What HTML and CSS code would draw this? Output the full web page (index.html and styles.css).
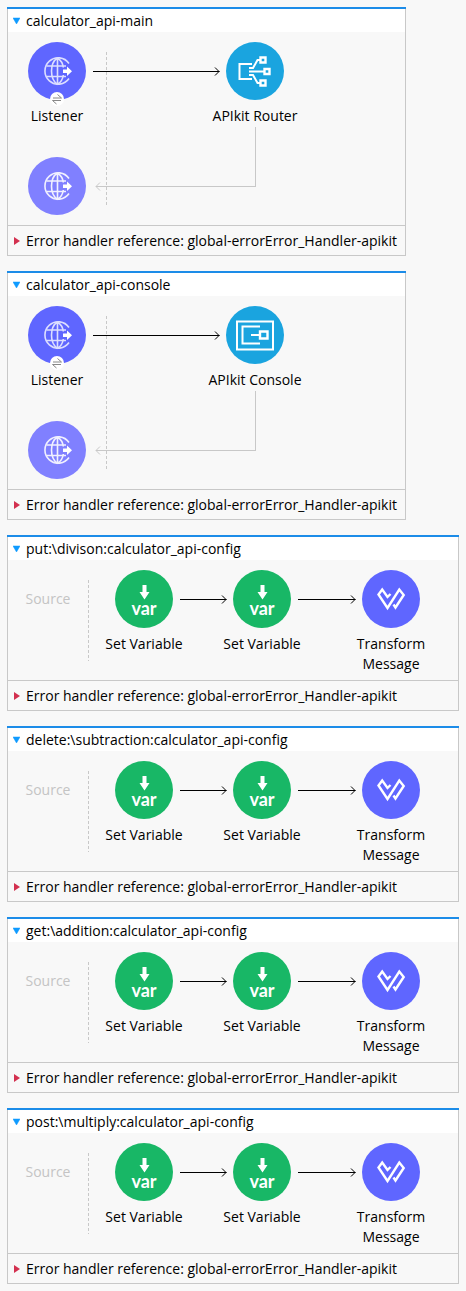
FILE: index.html
```html
<!DOCTYPE html>
<html lang="en">
<head>
<meta charset="utf-8">
<title>calculator_api</title>
<link rel="stylesheet" href="styles.css">
</head>
<body>
<svg class="defs" aria-hidden="true">
  <symbol id="globe" viewBox="0 0 58 58">
    <g fill="none" stroke="currentColor" stroke-width="1.6">
      <path d="M41 21.5A13.2 13.2 0 1 0 41 36.5"/>
      <path d="M29.500 16v26.500M29.500 16c-8 5-8 21 0 26.500M29.500 16c4.500 3 5.500 7 5.800 9.500M29.500 42.500c4.500-3 5.500-7 5.800-9.500M18.500 24H38M18.500 34.500H38"/>
    </g>
    <path d="M35 27.500h4v-3l5 4.700-5 4.800v-3h-4z" fill="#fff"/>
  </symbol>
  <symbol id="router" viewBox="0 0 58 58">
    <g fill="none" stroke="#fff" stroke-width="2">
      <path d="M26 22H13.500v15H26"/>
      <path d="M23 26h4l4.500-8H34M23 29.500h15M23 33h4l4.500 8H34"/>
      <path stroke-width="2.400" d="M34.500 15.500h5v5h-5zM38.500 27h5v5h-5zM34.500 38.500h5v5h-5z"/>
    </g>
  </symbol>
  <symbol id="console" viewBox="0 0 58 58">
    <g fill="none" stroke="#fff" stroke-width="2">
      <path d="M11 15.500h36v28H11z"/>
      <path d="M34 20.500H16.500v17H34M25 29h8"/>
      <path stroke-width="2.400" d="M34 25.500h7.500v7H34z"/>
    </g>
  </symbol>
  <symbol id="variable" viewBox="0 0 58 58">
    <path d="M27.500 15h4v7h3L29.500 29.500 24.500 22h3z" fill="#fff"/>
  </symbol>
  <symbol id="transform" viewBox="0 0 58 58">
    <path d="M28.500 24 25.500 27 20.200 19.500 16.500 24.500 25.500 38 37.300 19.500 41.700 25 33.500 37.500 31.500 34.500" fill="none" stroke="#fff" stroke-width="2.400"/>
  </symbol>
  <symbol id="head" viewBox="0 0 6 9">
    <path d="M0 4.500H5.500M1 .5l4 4-4 4" fill="none" stroke="currentColor"/>
  </symbol>
  <symbol id="head-left" viewBox="0 0 6 9">
    <path d="M5 .5l-4 4 4 4M1 4.500H6" fill="none" stroke="currentColor"/>
  </symbol>
</svg>
<main class="canvas"></main>
<script src="flows.js"></script>
</body>
</html>
```
FILE: styles.css
```css
* {
  box-sizing: border-box;
}

body {
  margin: 0;
  background: #f8f8f8;
  color: #000;
  font: 14px/20px "Open Sans", "Noto Sans", sans-serif;
}

.defs {
  position: absolute;
  width: 0;
  height: 0;
}

.canvas {
  display: flex;
  flex-direction: column;
  gap: 15px;
  padding: 7px;
}

.flow {
  border: 1px solid #c8c8c8;
  border-top: 0;
}

.flow::before {
  content: "";
  display: block;
  height: 2px;
  margin: 0 -1px;
  background: #1c8ce8;
}

.flow.api {
  width: fit-content;
}

.title {
  margin: 0;
  font: inherit;
}

.toggle {
  display: flex;
  align-items: center;
  gap: 6px;
  width: 100%;
  padding: 0 5px;
  border: 0;
  background: none;
  color: inherit;
  font: inherit;
  text-align: left;
  white-space: nowrap;
}

.title .toggle {
  height: 23px;
  background: #fff;
}

.errors {
  height: 29px;
}

.marker {
  flex: none;
  width: 7px;
  height: 8px;
}

.body {
  display: grid;
  border-bottom: 1px solid #c8c8c8;
}

.flow.api .body {
  grid-template-columns: 70px minmax(128px, 1fr) 70px;
  grid-template-rows: 84px auto;
  padding: 10px 115px 10px 14px;
}

.flow.resource .body {
  grid-template-columns: 80px 21px 70px minmax(48px, 48fr) 70px minmax(59px, 59fr) 70px;
  padding: 10px 32px 6px 0;
}

.node {
  display: flex;
  flex-direction: column;
  align-items: center;
  gap: 6px;
}

.disc {
  position: relative;
  flex: none;
  width: 58px;
  height: 58px;
  border-radius: 50%;
  color: #fff;
}

.disc svg {
  display: block;
}

.purple {
  background: #5f66ff;
}

.purple.listener {
  color: #dcdeff;
}

.faded {
  background: #8080ff;
  color: #f0f0ff;
}

.blue {
  background: #1aa4df;
}

.green {
  background: #18b766;
}

.var-text {
  position: absolute;
  top: 28px;
  left: 0;
  width: 100%;
  font: bold 18px/20px Lato, sans-serif;
  text-align: center;
}

.badge {
  position: absolute;
  left: 22px;
  bottom: -6px;
  width: 14px;
  height: 14px;
  border-radius: 50%;
  background: #fff;
}

.label {
  width: max-content;
  max-width: 110px;
  text-align: center;
}

.arrow {
  display: flex;
  align-items: center;
  height: 9px;
  margin: 25px 0 0 1px;
}

.arrow .line {
  flex: 1;
  height: 1px;
  background: #000;
}

.arrow svg {
  flex: none;
}

.source {
  height: 58px;
  color: #c4c4c4;
  line-height: 58px;
  text-align: center;
}

.divider {
  width: 1px;
  margin: 10px 0 13px;
  background: repeating-linear-gradient(#c8c8c8 0 3px, transparent 3px 5px);
}

.api .listener-node,
.api .arrow,
.api .target {
  grid-row: 1;
}

.api .divider {
  grid-area: 1 / 2 / 3 / 3;
  margin: 10px 0 9px 14px;
}

.api .arrow {
  grid-column: 2;
}

.api .target {
  grid-column: 3;
}

.response {
  grid-area: 2 / 1;
  padding-top: 31px;
}

.return {
  display: flex;
  align-items: flex-end;
  grid-area: 2 / 2 / 3 / 4;
  height: 65px;
  margin: 0 34px 0 3px;
  color: #c8c8c8;
}

.return .corner {
  flex: 1;
  height: 60px;
  margin-bottom: 4px;
  border: solid currentColor;
  border-width: 0 1px 1px 0;
}
```
FILE: flows.js
```js
const use = (id, w, h) => `<svg width="${w}" height="${h}" aria-hidden="true"><use href="#${id}"/></svg>`;
const arrow = `<div class="arrow"><span class="line"></span>${use("head", 6, 9)}</div>`;
const down = `<svg class="marker" viewBox="0 0 7 8" aria-hidden="true"><path d="M0 1h7L3.500 7z" fill="#0f9bff" stroke="#0f9bff" stroke-width=".5"/></svg>`;
const right = `<svg class="marker" viewBox="0 0 7 8" aria-hidden="true"><path d="M1 0l6 4-6 4z" fill="#d3304f"/></svg>`;
const badge = `<svg class="badge" viewBox="0 0 14 14" aria-hidden="true"><path d="M3 6h8.500L7.500 2.500M11 8.500H2.500l4 3.500" fill="none" stroke="#888"/></svg>`;
const varText = `<span class="var-text">var</span>`;

const node = (icon, color, label, cls = "", extra = "") =>
  `<div class="node ${cls}"><div class="disc ${color}">${use(icon, 58, 58)}${extra}</div>${label ? `<span class="label">${label}</span>` : ""}</div>`;

const apiBody = (icon, label) =>
  node("globe", "purple listener", "Listener", "listener-node", badge) +
  `<div class="divider"></div>` + arrow + node(icon, "blue", label, "target") +
  node("globe", "faded", "", "response") +
  `<div class="return">${use("head-left", 6, 9)}<span class="corner"></span></div>`;

const resourceBody = () =>
  `<span class="source">Source</span><div class="divider"></div>` +
  node("variable", "green", "Set Variable", "", varText) + arrow +
  node("variable", "green", "Set Variable", "", varText) + arrow +
  node("transform", "purple", "Transform Message");

const flow = (kind, name, body) => `<section class="flow ${kind}">
  <h2 class="title"><button class="toggle" type="button">${down}${name}</button></h2>
  <div class="body">${body}</div>
  <button class="toggle errors" type="button">${right}Error handler reference: global-errorError_Handler-apikit</button>
</section>`;

document.querySelector(".canvas").innerHTML = [
  flow("api", "calculator_api-main", apiBody("router", "APIkit Router")),
  flow("api", "calculator_api-console", apiBody("console", "APIkit Console")),
  ...["put:\\divison", "delete:\\subtraction", "get:\\addition", "post:\\multiply"]
    .map(path => flow("resource", `${path}:calculator_api-config`, resourceBody()))
].join("");
```
